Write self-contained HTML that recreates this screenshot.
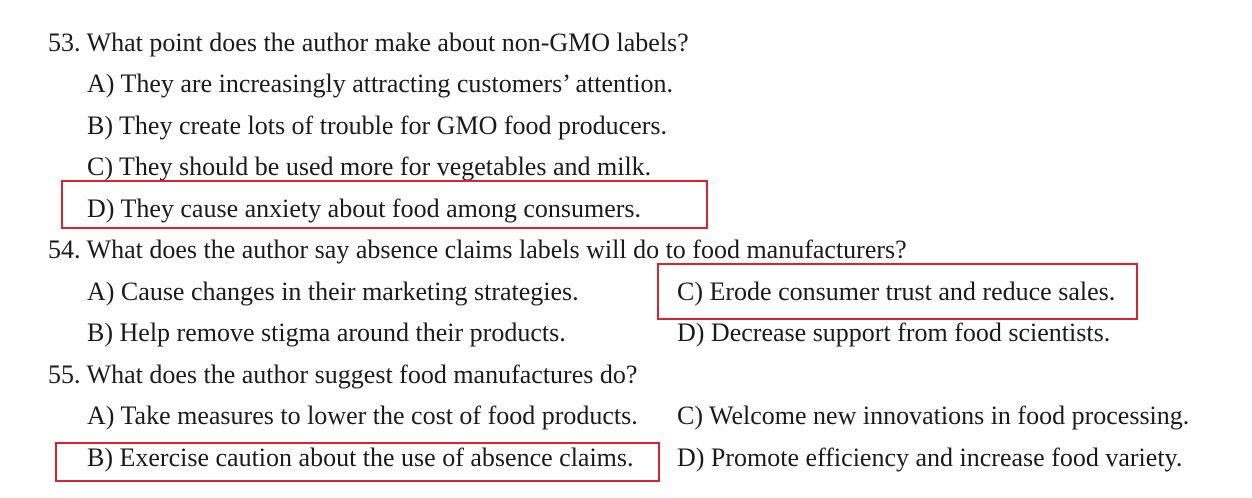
<!DOCTYPE html>
<html><head><meta charset="utf-8"><style>
body{margin:0;width:1252px;height:498px;background:#fff;position:relative;overflow:hidden;font-family:"Liberation Serif",serif;color:#1a1a1a;}
.l{position:absolute;font-size:26px;line-height:30px;white-space:nowrap;}
.b{position:absolute;border:2px solid #d9232e;box-sizing:border-box;}
</style></head><body>
<div class="l" style="left:48px;top:28px">53. What point does the author make about non-GMO labels?</div>
<div class="l" style="left:87px;top:69px">A) They are increasingly attracting customers’ attention.</div>
<div class="l" style="left:87px;top:111px">B) They create lots of trouble for GMO food producers.</div>
<div class="l" style="left:87px;top:152px">C) They should be used more for vegetables and milk.</div>
<div class="l" style="left:87px;top:194px">D) They cause anxiety about food among consumers.</div>
<div class="l" style="left:48px;top:235px">54. What does the author say absence claims labels will do to food manufacturers?</div>
<div class="l" style="left:87px;top:277px">A) Cause changes in their marketing strategies.</div>
<div class="l" style="left:677px;top:277px">C) Erode consumer trust and reduce sales.</div>
<div class="l" style="left:87px;top:318px">B) Help remove stigma around their products.</div>
<div class="l" style="left:677px;top:318px">D) Decrease support from food scientists.</div>
<div class="l" style="left:48px;top:360px">55. What does the author suggest food manufactures do?</div>
<div class="l" style="left:87px;top:401px">A) Take measures to lower the cost of food products.</div>
<div class="l" style="left:677px;top:401px">C) Welcome new innovations in food processing.</div>
<div class="l" style="left:87px;top:443px">B) Exercise caution about the use of absence claims.</div>
<div class="l" style="left:677px;top:443px">D) Promote efficiency and increase food variety.</div>
<div class="b" style="left:61px;top:180px;width:647px;height:49px"></div>
<div class="b" style="left:657px;top:263px;width:481px;height:57px"></div>
<div class="b" style="left:55px;top:442px;width:605px;height:40px"></div>
</body></html>
